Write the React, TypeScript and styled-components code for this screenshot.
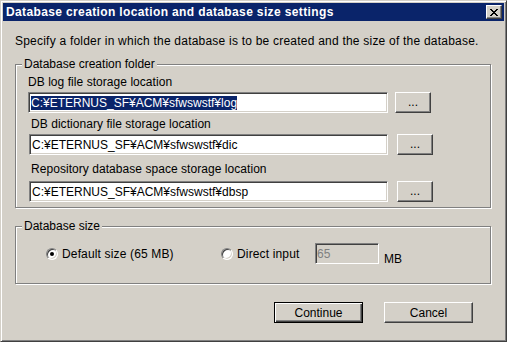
import React from "react";
import styled, { createGlobalStyle } from "styled-components";

const Global = createGlobalStyle`
  html, body { margin: 0; padding: 0; background: #d4d0c8; }
  * { box-sizing: border-box; }
`;

const Window = styled.div`
  width: 507px;
  height: 342px;
  background: #d4d0c8;
  border: 1px solid;
  border-color: #d4d0c8 #404040 #404040 #d4d0c8;
  box-shadow: inset 1px 1px 0 #fff, inset -1px -1px 0 #808080;
  padding: 2px;
  display: flex;
  flex-direction: column;
  font-family: "Liberation Sans", Arial, sans-serif;
  font-size: 12px;
  color: #000;
`;

const TitleBar = styled.div`
  height: 18px;
  background: #0a246a;
  display: flex;
  align-items: center;
  padding: 0 2px 0 3px;
`;

const TitleText = styled.div`
  flex: 1;
  color: #fff;
  font-weight: bold;
  line-height: 18px;
  letter-spacing: 0.37px;
  white-space: nowrap;
`;

const raised = `
  border: 1px solid;
  border-color: #fff #404040 #404040 #fff;
  box-shadow: inset -1px -1px 0 #808080;
  background: #d4d0c8;
`;

const CloseButton = styled.div`
  width: 16px;
  height: 14px;
  ${raised}
  display: flex;
  align-items: center;
  justify-content: center;
  padding-right: 1px;
`;

const Body = styled.div`
  flex: 1;
  display: flex;
  flex-direction: column;
  padding: 12px 13px 0 12px;
`;

const Description = styled.div`
  line-height: 16px;
  letter-spacing: 0.22px;
  white-space: nowrap;
`;

const Group = styled.div<{ $mt: number; $pt: number; $pb: number; $pl: number }>`
  position: relative;
  margin-top: ${(p) => p.$mt}px;
  border: 1px solid #808080;
  box-shadow: inset 1px 1px 0 #fff, 1px 1px 0 #fff;
  padding: ${(p) => `${p.$pt}px 0 ${p.$pb}px ${p.$pl}px`};
  display: flex;
  flex-direction: column;
`;

const Legend = styled.div`
  position: absolute;
  top: -9px;
  left: 6px;
  padding: 0 2px;
  background: #d4d0c8;
  line-height: 16px;
  white-space: nowrap;
`;

const Field = styled.div<{ $mt: number }>`
  display: flex;
  flex-direction: column;
  margin-top: ${(p) => p.$mt}px;
`;

const FieldLabel = styled.div<{ $indent: number; $mb: number }>`
  line-height: 16px;
  margin-left: ${(p) => p.$indent}px;
  margin-bottom: ${(p) => p.$mb}px;
  letter-spacing: 0.05px;
  white-space: nowrap;
`;

const FieldLine = styled.div`
  display: flex;
  align-items: flex-start;
`;

const sunken = `
  border: 1px solid;
  border-color: #808080 #fff #fff #808080;
  box-shadow: inset 1px 1px 0 #404040, inset -1px -1px 0 #d4d0c8;
`;

const TextBox = styled.div<{ $width: number; $indent?: number; $disabled?: boolean }>`
  width: ${(p) => p.$width}px;
  height: 21px;
  margin-left: ${(p) => p.$indent ?? 0}px;
  ${sunken}
  background: ${(p) => (p.$disabled ? "#d4d0c8" : "#fff")};
  color: ${(p) => (p.$disabled ? "#808080" : "#000")};
  padding: 0 0 0 ${(p) => (p.$disabled ? 1 : 2)}px;
  display: flex;
  align-items: center;
  white-space: nowrap;
  overflow: hidden;
`;

const Selected = styled.span`
  background: #0a246a;
  color: #fff;
  line-height: 14px;
  display: inline-block;
`;

const BrowseButton = styled.div<{ $gap: number }>`
  width: 36px;
  height: 21px;
  margin-left: ${(p) => p.$gap}px;
  ${raised}
  display: flex;
  align-items: center;
  justify-content: center;
  line-height: 14px;
  padding-bottom: 1px;
`;

const RadioRow = styled.div`
  display: flex;
  align-items: center;
  height: 21px;
`;

const RadioOption = styled.div<{ $width: number }>`
  width: ${(p) => p.$width}px;
  display: flex;
  align-items: center;
  white-space: nowrap;
`;

const RadioCircle = styled.div<{ $checked?: boolean }>`
  width: 12px;
  height: 12px;
  border-radius: 50%;
  border: 1px solid;
  border-color: #808080 #fff #fff #808080;
  box-shadow: inset 1px 1px 0 #404040, inset -1px -1px 0 #d4d0c8;
  background: #fff;
  display: flex;
  align-items: center;
  justify-content: center;
  flex: none;
  &::after {
    content: "";
    width: 4px;
    height: 4px;
    border-radius: 50%;
    background: ${(p) => (p.$checked ? "#000" : "transparent")};
  }
`;

const RadioLabel = styled.span`
  margin-left: 4px;
  line-height: 16px;
  letter-spacing: 0.15px;
`;

const Unit = styled.span`
  margin-left: 5px;
  align-self: flex-end;
  line-height: 16px;
  margin-bottom: -3px;
`;

const ButtonRow = styled.div`
  display: flex;
  justify-content: flex-end;
  gap: 21px;
  margin-top: 18px;
  padding-right: 18px;
`;

const DialogButton = styled.div<{ $default?: boolean }>`
  width: 89px;
  height: 21px;
  display: flex;
  align-items: center;
  justify-content: center;
  line-height: 14px;
  background: #d4d0c8;
  ${(p) =>
    p.$default
      ? `border: 1px solid #000;
         box-shadow: inset 1px 1px 0 #fff, inset -1px -1px 0 #404040, inset -2px -2px 0 #808080;`
      : raised}
`;

const CloseGlyph = () => (
  <svg width="8" height="7" viewBox="0 0 8 7" shapeRendering="crispEdges">
    <path
      fill="#000"
      d="M0 0h2v1H0zM6 0h2v1H6zM1 1h2v1H1zM5 1h2v1H5zM2 2h4v1H2zM3 3h2v1H3zM2 4h4v1H2zM1 5h2v1H1zM5 5h2v1H5zM0 6h2v1H0zM6 6h2v1H6z"
    />
  </svg>
);

const folders = [
  {
    label: "DB log file storage location",
    value: "C:¥ETERNUS_SF¥ACM¥sfwswstf¥log",
    selected: true,
    mt: 0,
    labelIndent: 0,
    labelMb: 2,
    inputIndent: 0,
    width: 360,
    gap: 7,
  },
  {
    label: "DB dictionary file storage location",
    value: "C:¥ETERNUS_SF¥ACM¥sfwswstf¥dic",
    selected: false,
    mt: 3,
    labelIndent: 3,
    labelMb: 2,
    inputIndent: 1,
    width: 359,
    gap: 9,
  },
  {
    label: "Repository database space storage location",
    value: "C:¥ETERNUS_SF¥ACM¥sfwswstf¥dbsp",
    selected: false,
    mt: 6,
    labelIndent: 3,
    labelMb: 4,
    inputIndent: 1,
    width: 359,
    gap: 9,
  },
];

export default function App() {
  return (
    <>
      <Global />
      <Window>
        <TitleBar>
          <TitleText>Database creation location and database size settings</TitleText>
          <CloseButton>
            <CloseGlyph />
          </CloseButton>
        </TitleBar>
        <Body>
          <Description>
            Specify a folder in which the database is to be created and the size of the database.
          </Description>
          <Group $mt={15} $pt={9} $pb={5} $pl={12}>
            <Legend>Database creation folder</Legend>
            {folders.map((f) => (
              <Field key={f.label} $mt={f.mt}>
                <FieldLabel $indent={f.labelIndent} $mb={f.labelMb}>
                  {f.label}
                </FieldLabel>
                <FieldLine>
                  <TextBox $width={f.width} $indent={f.inputIndent}>
                    {f.selected ? <Selected>{f.value}</Selected> : f.value}
                  </TextBox>
                  <BrowseButton $gap={f.gap}>...</BrowseButton>
                </FieldLine>
              </Field>
            ))}
          </Group>
          <Group $mt={18} $pt={16} $pb={19} $pl={30}>
            <Legend>Database size</Legend>
            <RadioRow>
              <RadioOption $width={175}>
                <RadioCircle $checked />
                <RadioLabel>Default size (65 MB)</RadioLabel>
              </RadioOption>
              <RadioOption $width={94}>
                <RadioCircle />
                <RadioLabel>Direct input</RadioLabel>
              </RadioOption>
              <TextBox $width={64} $disabled>
                65
              </TextBox>
              <Unit>MB</Unit>
            </RadioRow>
          </Group>
          <ButtonRow>
            <DialogButton $default>Continue</DialogButton>
            <DialogButton>Cancel</DialogButton>
          </ButtonRow>
        </Body>
      </Window>
    </>
  );
}
